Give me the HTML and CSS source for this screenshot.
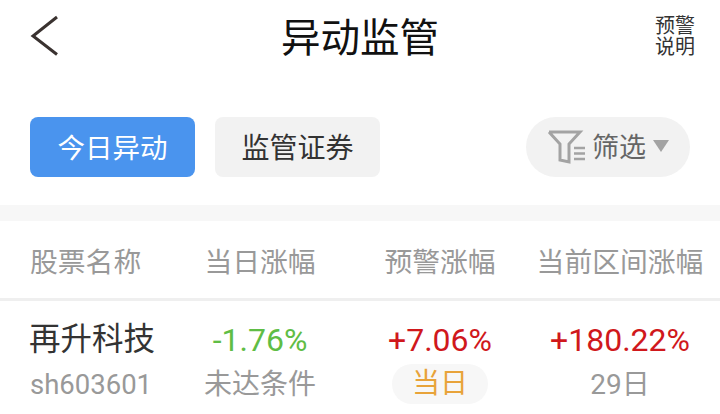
FILE: index.html
```html
<!DOCTYPE html>
<html lang="zh-CN">
<head>
    <meta charset="UTF-8">
    <meta name="viewport" content="width=device-width, initial-scale=1.0">
    <title>异动监管</title>
    <link rel="stylesheet" href="styles.css">
</head>
<body>
    <header class="topbar">
        <svg class="back" width="30" height="42" viewBox="0 0 30 42">
            <path d="M27 2 L3 21 L27 39.500" fill="none" stroke="#3a3230" stroke-width="3"/>
        </svg>
        <h1 class="title">异动监管</h1>
        <div class="help">
            <div class="help-line">预警</div>
            <div class="help-line">说明</div>
        </div>
    </header>

    <div class="toolbar">
        <div class="tab tab-active">今日异动</div>
        <div class="tab">监管证券</div>
        <div class="filter">
            <svg class="filter-icon" width="38" height="34" viewBox="0 0 38 34">
                <path d="M2 2 H33 L22 14 V23 M2 2 L13 14 V30 L22 32 V23" fill="none" stroke="#a3a3a3" stroke-width="3"/>
                <path d="M27 18 H38 M27 23.500 H38 M27 29 H38" fill="none" stroke="#a3a3a3" stroke-width="2.500"/>
            </svg>
            <span class="filter-text">筛选</span>
            <span class="caret"></span>
        </div>
    </div>

    <div class="band"></div>

    <div class="grid heads">
        <div class="col-name">股票名称</div>
        <div>当日涨幅</div>
        <div>预警涨幅</div>
        <div>当前区间涨幅</div>
    </div>

    <div class="grid row">
        <div class="col-name">
            <div class="stock">再升科技</div>
            <div class="code">sh603601</div>
        </div>
        <div>
            <div class="num green">-1.76%</div>
            <div class="sub">未达条件</div>
        </div>
        <div>
            <div class="num red">+7.06%</div>
            <div class="pill">当日</div>
        </div>
        <div>
            <div class="num red">+180.22%</div>
            <div class="sub">29日</div>
        </div>
    </div>
</body>
</html>
```

FILE: styles.css
```css
html, body {
    height: 414px;
    overflow: hidden;
}
body {
    margin: 0;
    background-color: #fff;
    font-family: "Roboto", "Noto Sans CJK SC", sans-serif;
}
.topbar {
    height: 77px;
    display: grid;
    grid-template-columns: 1fr auto 1fr;
    align-items: center;
    padding: 0 30px;
}
.back {
    margin-bottom: 5px;
}
.title {
    margin: 0;
    font-size: 39.500px;
    line-height: 48px;
    font-weight: 400;
    color: #111;
}
.help {
    justify-self: end;
    margin-right: -5px;
    margin-bottom: 4px;
    font-size: 20px;
    color: #333;
}
.help-line {
    height: 21px;
    line-height: 21px;
}
.toolbar {
    height: 60px;
    margin-top: 40px;
    padding: 0 30px;
    display: flex;
    gap: 20px;
}
.tab {
    width: 165px;
    padding-bottom: 3px;
    box-sizing: border-box;
    border-radius: 8px;
    background-color: #f2f2f2;
    color: #333;
    font-size: 28px;
    display: flex;
    align-items: center;
    justify-content: center;
}
.tab-active {
    background-color: #4a94ee;
    color: #fff;
    font-size: 27.500px;
}
.filter {
    width: 164px;
    margin-left: auto;
    border-radius: 30px;
    background-color: #f2f2f2;
    display: flex;
    align-items: center;
    padding-left: 21px;
    box-sizing: border-box;
}
.filter-icon {
    flex: none;
}
.filter-text {
    margin-left: 7px;
    margin-bottom: 4px;
    font-size: 27px;
    color: #666;
}
.caret {
    margin-left: 7px;
    margin-bottom: 2px;
    border-left: 8px solid transparent;
    border-right: 8px solid transparent;
    border-top: 12px solid #a3a3a3;
}
.band {
    height: 16px;
    margin-top: 28px;
    background-color: #f7f7f7;
}
.grid {
    display: grid;
    text-align: center;
}
.heads, .row {
    grid-template-columns: 170px 180px 180px 180px;
}
.col-name {
    padding-left: 30px;
    text-align: left;
}
.heads {
    height: 77px;
    align-items: center;
    border-bottom: 3px solid #efefef;
    font-size: 27.800px;
    color: #999;
}
.stock {
    margin-left: -1px;
    font-size: 31.500px;
    line-height: 44px;
    color: #333;
}
.code, .sub {
    margin-top: 1px;
    font-size: 28px;
    line-height: 44px;
    color: #999;
}
.code {
    font-size: 27.500px;
}
.row {
    padding-top: 17px;
}
.num {
    font-size: 32px;
    line-height: 44px;
}
.green {
    color: #5fbd45;
}
.red {
    color: #d0181c;
}
.pill {
    width: 96px;
    height: 40px;
    margin: 2px auto 0;
    border-radius: 20px;
    background-color: #f7f7f7;
    color: #e8a33a;
    font-size: 28px;
    line-height: 40px;
}
```
